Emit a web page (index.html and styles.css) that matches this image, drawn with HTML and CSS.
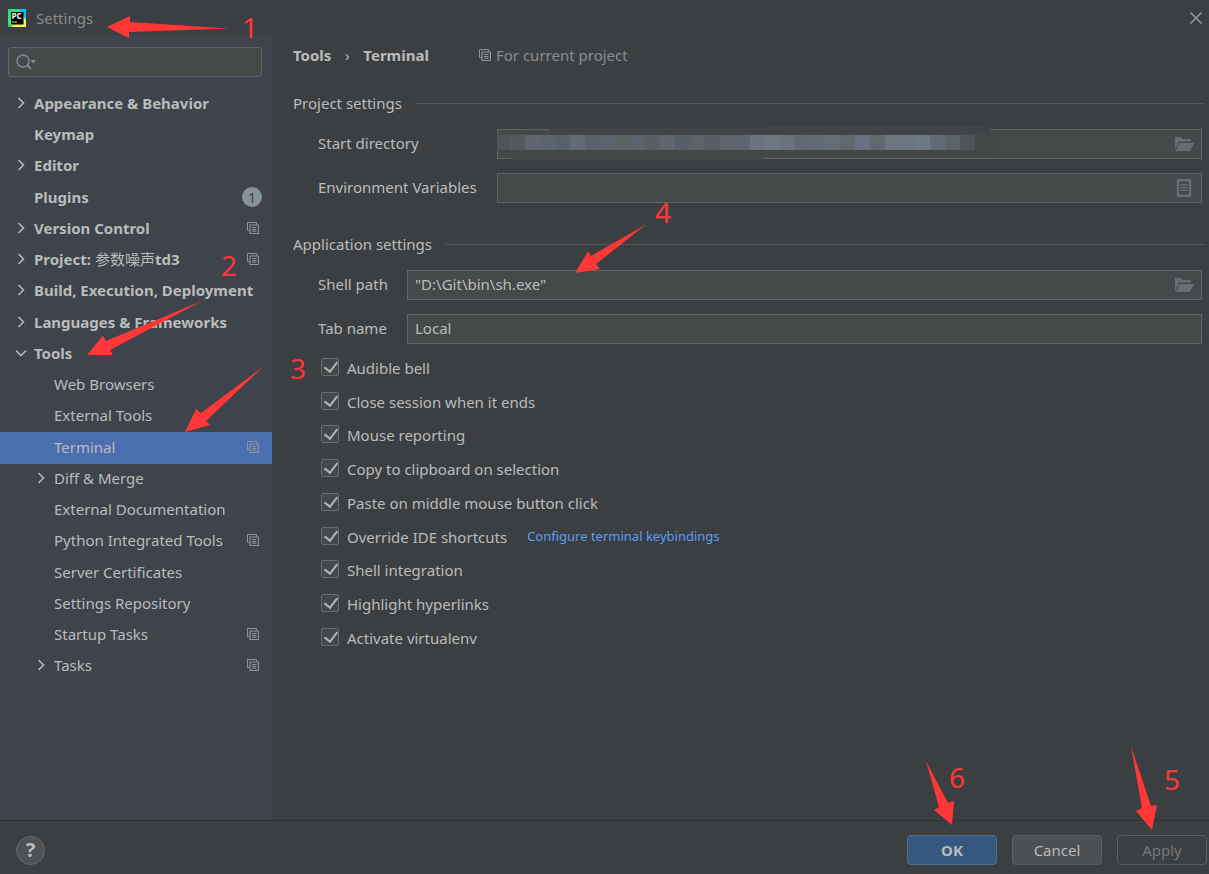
FILE: index.html
```html
<!DOCTYPE html>
<html lang="en">
<head>
<meta charset="utf-8">
<title>Settings</title>
<link rel="stylesheet" href="styles.css">
</head>
<body>
<svg class="defs" width="0" height="0" aria-hidden="true">
  <symbol id="scope" viewBox="0 0 12 12"><path d="M9.500 2.500V.5h-9v8h2" fill="none" stroke="currentColor"/><path d="M3 3h8.500v8.500H3z" fill="none" stroke="currentColor" stroke-width="1.200"/><path d="M5 5.500h4.500M5 7.500h4.500M5 9.200h4.500" stroke="currentColor" stroke-width="1"/></symbol>
  <symbol id="right" viewBox="0 0 12 12"><path d="M3.500 1 8.500 6l-5 5" fill="none" stroke="currentColor" stroke-width="1.600"/></symbol>
  <symbol id="down" viewBox="0 0 12 12"><path d="M1 3.500 6 8.500l5-5" fill="none" stroke="currentColor" stroke-width="1.600"/></symbol>
  <symbol id="folder" viewBox="0 0 20 16"><path d="M1 14V1h6l1.500 2H17v2.500H5z" fill="currentColor"/><path d="M5.500 7H20l-4 8H1.500z" fill="currentColor"/></symbol>
</svg>

<header class="titlebar">
  <svg class="logo" viewBox="0 0 18 18" aria-hidden="true">
    <defs><linearGradient id="lg" x1="0" y1="0" x2="1" y2="1"><stop offset="0" stop-color="#21d789"/><stop offset=".35" stop-color="#3bea62"/><stop offset=".7" stop-color="#fcf84a"/><stop offset="1" stop-color="#f5f04c"/></linearGradient></defs>
    <path d="M0 0h18v18H0z" fill="url(#lg)"/><path d="M10 0h8v11l-4-5z" fill="#07c3f2"/><path d="M0 12l4 6H0z" fill="#21c9a5"/>
    <path d="M3 3h12.500v12.500H3z" fill="#000"/><text x="3.600" y="9.800" class="logo-text">PC</text><path d="M4 12.500h5v1H4z" fill="#ccc"/>
  </svg>
  <h1 class="title">Settings</h1>
  <button class="close" aria-label="Close"><svg viewBox="0 0 12 12" width="12" height="12"><path d="M.5.5l11 11M11.500.5l-11 11" stroke="currentColor" stroke-width="1.300"/></svg></button>
</header>

<main class="main">
  <aside class="sidebar">
    <div class="search">
      <svg viewBox="0 0 20 16" width="20" height="16" aria-hidden="true"><circle cx="7" cy="7" r="6" fill="none" stroke="currentColor" stroke-width="1.400"/><path d="M11 11l4 4" stroke="currentColor" stroke-width="1.800"/><path d="M14.500 6H20l-2.700 3.500z" fill="currentColor"/></svg>
      <input type="text" aria-label="Search settings">
    </div>
    <ul class="tree">
      <li class="row top"><svg class="arrow"><use href="#right"/></svg><span>Appearance &amp; Behavior</span></li>
      <li class="row top"><i class="arrow"></i><span>Keymap</span></li>
      <li class="row top"><svg class="arrow"><use href="#right"/></svg><span>Editor</span></li>
      <li class="row top"><i class="arrow"></i><span>Plugins</span><b class="badge">1</b></li>
      <li class="row top"><svg class="arrow"><use href="#right"/></svg><span>Version Control</span><svg class="scope"><use href="#scope"/></svg></li>
      <li class="row top"><svg class="arrow"><use href="#right"/></svg><span>Project: <span class="cjk">参数噪声</span>td3</span><svg class="scope"><use href="#scope"/></svg></li>
      <li class="row top"><svg class="arrow"><use href="#right"/></svg><span>Build, Execution, Deployment</span></li>
      <li class="row top"><svg class="arrow"><use href="#right"/></svg><span>Languages &amp; Frameworks</span></li>
      <li class="row top"><svg class="arrow"><use href="#down"/></svg><span>Tools</span></li>
      <li class="row sub"><i class="arrow"></i><span>Web Browsers</span></li>
      <li class="row sub"><i class="arrow"></i><span>External Tools</span></li>
      <li class="row sub selected"><i class="arrow"></i><span>Terminal</span><svg class="scope"><use href="#scope"/></svg></li>
      <li class="row sub"><svg class="arrow"><use href="#right"/></svg><span>Diff &amp; Merge</span></li>
      <li class="row sub"><i class="arrow"></i><span>External Documentation</span></li>
      <li class="row sub"><i class="arrow"></i><span>Python Integrated Tools</span><svg class="scope"><use href="#scope"/></svg></li>
      <li class="row sub"><i class="arrow"></i><span>Server Certificates</span></li>
      <li class="row sub"><i class="arrow"></i><span>Settings Repository</span></li>
      <li class="row sub"><i class="arrow"></i><span>Startup Tasks</span><svg class="scope"><use href="#scope"/></svg></li>
      <li class="row sub"><svg class="arrow"><use href="#right"/></svg><span>Tasks</span><svg class="scope"><use href="#scope"/></svg></li>
    </ul>
  </aside>

  <section class="content">
    <nav class="crumbs">
      <b>Tools</b><span class="sep">›</span><b>Terminal</b>
      <span class="hint"><svg class="scope"><use href="#scope"/></svg>For current project</span>
    </nav>

    <section class="group">
      <h2 class="heading">Project settings</h2>
      <div class="fields wide">
        <label for="dir">Start directory</label>
        <div class="field">
          <input id="dir" type="text">
          <svg class="mosaic" width="500" height="34" viewBox="0 0 500 34" aria-hidden="true">
            <path d="M54 0h210l10-2h214q8 2 10 8v18q-4 5-12 5H268v3H30q-16 0-24-6-4-4-4-10 0-10 7-14h45z" fill="#444748"/>
            <path d="M54 0h210l10-2h214q8 2 8 8H54z" fill="#414446"/>
            <g id="tiles"></g>
          </svg>
          <button class="pick" aria-label="Browse"><svg width="20" height="16"><use href="#folder"/></svg></button>
        </div>
        <label for="env">Environment Variables</label>
        <div class="field">
          <input id="env" type="text">
          <button class="pick" aria-label="Edit variables"><svg width="20" height="18" viewBox="0 0 20 18"><path d="M4 1h12v16H4z" fill="none" stroke="currentColor" stroke-width="2.500"/><path d="M6.500 6h7M6.500 8.700h7M6.500 11.400h7" stroke="currentColor" stroke-width="1.400"/></svg></button>
        </div>
      </div>
    </section>

    <section class="group">
      <h2 class="heading">Application settings</h2>
      <div class="fields">
        <label for="shell">Shell path</label>
        <div class="field">
          <input id="shell" type="text" value="&quot;D:\Git\bin\sh.exe&quot;">
          <button class="pick" aria-label="Browse shell"><svg width="20" height="16"><use href="#folder"/></svg></button>
        </div>
        <label for="tab">Tab name</label>
        <div class="field"><input id="tab" type="text" value="Local"></div>
      </div>
      <div class="checks">
        <div class="check"><label><input type="checkbox" checked>Audible bell</label></div>
        <div class="check"><label><input type="checkbox" checked>Close session when it ends</label></div>
        <div class="check"><label><input type="checkbox" checked>Mouse reporting</label></div>
        <div class="check"><label><input type="checkbox" checked>Copy to clipboard on selection</label></div>
        <div class="check"><label><input type="checkbox" checked>Paste on middle mouse button click</label></div>
        <div class="check"><label><input type="checkbox" checked>Override IDE shortcuts</label><a href="#">Configure terminal keybindings</a></div>
        <div class="check"><label><input type="checkbox" checked>Shell integration</label></div>
        <div class="check"><label><input type="checkbox" checked>Highlight hyperlinks</label></div>
        <div class="check"><label><input type="checkbox" checked>Activate virtualenv</label></div>
      </div>
    </section>
  </section>
</main>

<footer class="footer">
  <button class="help" aria-label="Help">?</button>
  <button class="btn primary">OK</button>
  <button class="btn">Cancel</button>
  <button class="btn" disabled>Apply</button>
</footer>

<svg class="notes notes-start" width="700" height="440" viewBox="0 0 700 440">
  <path d="M107 27 130 16v6L229 28.500 129 32v6z"/>
  <path d="M87 355l16-19.500 3 5.500L203 300.500 110 350l3 5z"/>
  <path d="M185 432l11-23 5 4L264 366 206 421l4 4z"/>
  <path d="M575 273l13-21.500 3 4.500L646 224.500 596 264l4 5z"/>
  <text x="242" y="38">1</text>
  <text x="221" y="276">2</text>
  <text x="290" y="379">3</text>
  <text x="655" y="223">4</text>
</svg>
<svg class="notes notes-end" width="309" height="134" viewBox="900 740 309 134">
  <path d="M952 825l2-24-6 2L926 761 939 807l-5 3z"/>
  <path d="M1152 830l5-25-6 1L1131 746 1142 808l-6 3z"/>
  <text x="949" y="788">6</text>
  <text x="1164" y="790">5</text>
</svg>
<script src="tiles.js"></script>
</body>
</html>
```
FILE: styles.css
```css
* { box-sizing: border-box; }

body {
  margin: 0;
  min-height: 100vh;
  display: flex;
  flex-direction: column;
  position: relative;
  background: #3c3f41;
  color: #bbbbbb;
  font: 15px/24px "Noto Sans", "Noto Sans CJK SC", sans-serif;
}

input, button { font: inherit; color: inherit; }
button { padding: 0; }
.defs { position: absolute; }

.titlebar { display: flex; align-items: center; height: 35px; padding: 0 7px 0 8px; gap: 10px; }
.logo { width: 18px; height: 18px; }
.logo-text { font: bold 8px "Open Sans", sans-serif; fill: #fff; }
.title { flex: 1; margin: 0; font-size: 15px; font-weight: 400; color: #8a8c8d; }
.close { display: flex; border: 0; background: none; color: #a0a2a3; }

.main { flex: 1; display: flex; }
.sidebar { width: 272px; flex: none; padding-top: 12px; background: #3e434c; }
.search {
  display: flex;
  align-items: center;
  height: 30px;
  margin: 0 10px 11px 8px;
  padding-left: 7px;
  border: 1px solid #646464;
  border-radius: 3px;
  background: #45494a;
  color: #7f8b91;
}
.search input { flex: 1; min-width: 0; border: 0; outline: 0; background: none; }

.tree { margin: 0; padding: 0; list-style: none; }
.row { display: flex; align-items: center; height: 31px; padding: 0 13px 2px 15px; white-space: nowrap; }
.row:nth-child(4n + 3) { height: 32px; }
.top { font-weight: 700; }
.sub { padding-left: 35px; }
.selected { background: #4b6eaf; box-shadow: 0 1px #4b6eaf; }
.arrow { width: 12px; height: 12px; margin-right: 7px; flex: none; color: #b4b7ba; }
.sub .arrow { margin-right: 7px; }
.cjk { font-weight: 400; font-family: "Noto Sans CJK SC", sans-serif; }
.scope { width: 12px; height: 12px; margin-left: auto; flex: none; color: #8b959e; }
.badge {
  width: 20px;
  height: 20px;
  margin: 0 -3px 0 auto;
  border-radius: 50%;
  background: #87939a;
  color: #3e434c;
  font-weight: 400;
  font-size: 15px;
  line-height: 20px;
  text-align: center;
}

.content { flex: 1; min-width: 0; padding: 8px 4px 0 21px; }
.crumbs { display: flex; align-items: center; margin-bottom: 24px; }
.sep { width: 32px; text-align: center; }
.hint { display: flex; align-items: center; gap: 5px; margin-left: 50px; color: #8c8c8c; }

.group { margin-bottom: 29px; }
.heading { display: flex; align-items: center; gap: 13px; margin: 0 0 14px; font-size: 15px; font-weight: 400; }
.heading::after { content: ""; flex: 1; height: 1px; background: #555555; }
.fields { display: grid; grid-template-columns: 89px 1fr; row-gap: 14px; align-items: center; padding: 0 3px 0 25px; }
.fields label { padding-bottom: 2px; }
.wide { grid-template-columns: 179px 1fr; }
.field { position: relative; display: flex; height: 30px; border: 1px solid #646464; background: #45494a; }
.field input { flex: 1; min-width: 0; padding: 0 7px 2px; border: 0; outline: 0; background: none; }
.pick { display: flex; align-items: center; margin-right: 7px; border: 0; background: none; color: #646e73; }
.mosaic { position: absolute; left: -3px; top: -2px; overflow: visible; }

.checks { padding: 7px 0 0 28px; }
.check { display: flex; align-items: center; height: 34px; }
.check:nth-child(4n + 2) { height: 33px; }
.check label { display: flex; align-items: center; }
.check input {
  appearance: none;
  width: 18px;
  height: 18px;
  margin: 0 8px 2px 0;
  border: 1px solid #6b6b6b;
  border-radius: 2px;
  background: #43494a;
}
.check input:checked::before {
  content: "";
  display: block;
  width: 6px;
  height: 11px;
  margin: 0 0 0 5px;
  border: solid #b4b4b4;
  border-width: 0 2px 2px 0;
  transform: rotate(38deg);
}
.check a { margin-left: 20px; padding-bottom: 2px; font-size: 13px; color: #589df6; text-decoration: none; }

.footer { display: flex; align-items: center; gap: 15px; height: 54px; padding: 5px 2px 0 16px; border-top: 1px solid #323232; }
.help {
  width: 29px;
  height: 29px;
  margin-right: auto;
  border: 1px solid #666a6c;
  border-radius: 50%;
  background: #4e5254;
  font-weight: 700;
  font-size: 20px;
  line-height: 24px;
}
.btn { width: 90px; height: 30px; border: 1px solid #5e6060; border-radius: 4px; background: #4c5052; }
.primary { border-color: #4c708c; background: #365880; font-weight: 700; }
.btn:disabled { background: none; color: #777777; }

.notes { position: absolute; fill: #ff3737; pointer-events: none; }
.notes text { font: 28px "Noto Sans", sans-serif; }
.notes-start { left: 0; top: 0; }
.notes-end { right: 0; bottom: 0; }
```
FILE: tiles.js
```js
const colors = ["#50555a", "#565a5c", "#5d6770", "#5c656d", "#586069", "#636a74", "#59616a", "#5b626b",
  "#5a6264", "#5a636b", "#5b5f63", "#5e6770", "#585f69", "#5f6165", "#595e66", "#5f656d", "#5f6570",
  "#6a7480", "#6e7680", "#6b717d", "#62686f", "#616b76", "#656d76", "#60676d", "#67717f", "#61666f",
  "#6b7580", "#6a757f", "#6c7a84", "#626a78", "#5b6366", "#505456"];
const tiles = document.getElementById("tiles");
colors.forEach((color, i) => {
  const tile = document.createElementNS("http://www.w3.org/2000/svg", "rect");
  tile.setAttribute("x", i === 0 ? 2 : i * 15);
  tile.setAttribute("y", 7);
  tile.setAttribute("width", i === 0 ? 13 : 15);
  tile.setAttribute("height", 15);
  tile.setAttribute("fill", color);
  tiles.append(tile);
});
```
